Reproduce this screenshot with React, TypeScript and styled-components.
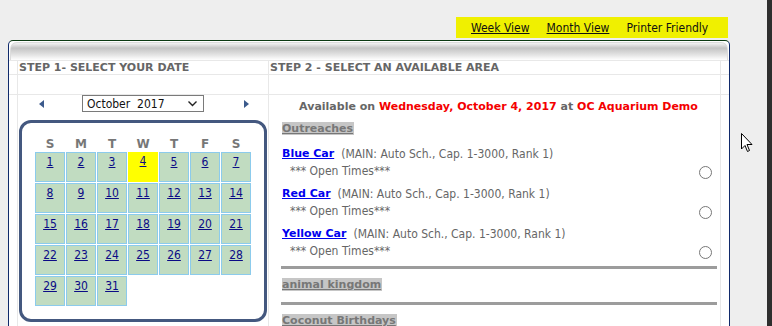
import React from 'react';
import styled, { createGlobalStyle } from 'styled-components';

const GlobalStyle = createGlobalStyle`
  html, body {
    margin: 0;
    padding: 0;
    background: #eeeeee;
    font-family: "DejaVu Sans Condensed", "DejaVu Sans", Tahoma, sans-serif;
    font-size: 12px;
    overflow: hidden;
  }
`;

const boldFont = `
  font-family: "DejaVu Sans", Verdana, sans-serif;
  font-weight: bold;
  font-size: 11px;
`;

const Page = styled.div`
  display: flex;
  height: 326px;
  position: relative;
`;

const Main = styled.div`
  flex: 1;
  padding: 17px 0 0 8px;
`;

const EdgeStrip = styled.div`
  width: 5px;
  background: #2e2e2e;
`;

const Frame = styled.div`
  width: 722px;
  display: flex;
  flex-direction: column;
`;

const Toolbar = styled.div`
  align-self: flex-end;
  margin-right: 2px;
  height: 21px;
  width: 272px;
  box-sizing: border-box;
  background: #f0f000;
  display: flex;
  align-items: flex-end;
  gap: 17px;
  padding: 0 0 3px 15px;
`;

const ToolLink = styled.a<{ $plain?: boolean }>`
  color: #111;
  line-height: 14px;
  text-decoration: ${(p) => (p.$plain ? 'none' : 'underline')};
  cursor: pointer;
`;

const Panel = styled.div`
  margin-top: 2px;
  border: 1px solid #102a6b;
  border-top-color: #0c3a12;
  border-bottom: none;
  border-radius: 5px 5px 0 0;
  background: #fff;
  height: 300px;
  overflow: hidden;
`;

const GradientBar = styled.div`
  margin: 1px 1px 0;
  height: 17px;
  border: 1px solid #dcdcdc;
  border-bottom: none;
  border-radius: 7px 7px 0 0;
  background: linear-gradient(to bottom, #f4f4f4 0%, #c4c4c4 30%, #e4e4e4 70%, #ffffff 100%);
`;

const Grid = styled.div`
  display: grid;
  grid-template-columns: 8px 250px 451px 8px;
  grid-template-rows: 13px 19px 240px;
  gap: 1px;
  padding-top: 1px;
  background: #e8e8e8;
`;

const Cell = styled.div`
  background: #fff;
  overflow: hidden;
`;

const StepTitle = styled.div`
  ${boldFont}
  color: #666;
  line-height: 13px;
  padding-left: 1px;
  white-space: nowrap;
`;

const LeftCol = styled.div`
  display: flex;
  flex-direction: column;
`;

const MonthNav = styled.div`
  display: flex;
  align-items: center;
  height: 17px;
  padding-left: 21px;
`;

const Arrow = styled.span<{ $right?: boolean }>`
  width: 0;
  height: 0;
  border-top: 4px solid transparent;
  border-bottom: 4px solid transparent;
  ${(p) => (p.$right ? 'border-left: 5px solid #3b5a8c;' : 'border-right: 5px solid #3b5a8c;')}
`;

const MonthSelect = styled.div`
  margin: 0 40px 0 38px;
  width: 122px;
  height: 17px;
  box-sizing: border-box;
  border: 1px solid #7a7a7a;
  display: flex;
  align-items: center;
  justify-content: space-between;
  padding: 0 6px 0 4px;
  color: #111;
  white-space: pre;
`;

const CalendarBox = styled.div`
  margin: 8px 0 0 1px;
  width: 248px;
  height: 202px;
  box-sizing: border-box;
  border: 3px solid #44587f;
  border-radius: 12px;
  padding: 15px 0 0 13px;
`;

const CalTable = styled.table`
  border-collapse: separate;
  border-spacing: 1px;
  margin: -1px;
`;

const DayHead = styled.th`
  ${boldFont}
  font-size: 12px;
  color: #777;
  height: 13px;
  line-height: 12px;
  padding: 0;
  vertical-align: top;
`;

const DayCell = styled.td<{ $today?: boolean; $empty?: boolean }>`
  width: 28px;
  height: 28px;
  padding: 0;
  text-align: center;
  vertical-align: top;
  background: ${(p) => (p.$empty ? 'transparent' : p.$today ? '#ffff00' : '#c1dcc1')};
  border: 1px solid ${(p) => (p.$empty ? 'transparent' : p.$today ? '#ffff00' : '#8ccbec')};
`;

const DayLink = styled.a<{ $today?: boolean }>`
  display: block;
  margin-top: ${(p) => (p.$today ? '1px' : '2px')};
  color: #0b0b86;
  text-decoration: underline;
  line-height: 14px;
  font-size: 12px;
`;

const RightCol = styled.div`
  padding: 4px 8px 0 13px;
`;

const Available = styled.div`
  ${boldFont}
  text-align: center;
  color: #666;
  line-height: 16px;
  padding-left: 3px;
  white-space: nowrap;
`;

const Red = styled.span`
  color: #f40000;
`;

const GroupName = styled.div`
  ${boldFont}
  display: inline-block;
  background: #c6c6c6;
  color: #777;
  text-decoration: underline;
  line-height: 13px;
  padding-right: 1px;
`;

const GroupHead = styled.div<{ $top: number }>`
  margin-top: ${(p) => p.$top}px;
  height: 13px;
`;

const Items = styled.div`
  margin-top: 10px;
`;

const Item = styled.div`
  height: 40px;
`;

const ItemLine = styled.div`
  line-height: 20px;
  height: 20px;
  color: #666;
  display: flex;
  align-items: center;
  white-space: nowrap;
`;

const ItemName = styled.a`
  ${boldFont}
  color: #0000ee;
  text-decoration: underline;
  margin-right: 7px;
`;

const OpenTimes = styled.div`
  color: #666;
  padding-left: 8px;
  display: flex;
  justify-content: space-between;
  align-items: flex-start;
  line-height: 14px;
  height: 14px;
`;

const Radio = styled.span`
  width: 11px;
  height: 11px;
  border: 1px solid #777;
  border-radius: 50%;
  margin-top: 2px;
  background: #fff;
`;

const Rule = styled.div<{ $top: number }>`
  height: 3px;
  background: #9c9c9c;
  margin: ${(p) => p.$top}px -5px 0 -1px;
`;

const Cursor = styled.svg`
  position: absolute;
  left: 741px;
  top: 133px;
`;

const weeks: (number | null)[][] = [
  [1, 2, 3, 4, 5, 6, 7],
  [8, 9, 10, 11, 12, 13, 14],
  [15, 16, 17, 18, 19, 20, 21],
  [22, 23, 24, 25, 26, 27, 28],
  [29, 30, 31, null, null, null, null],
];

const cars = ['Blue Car', 'Red Car', 'Yellow Car'];

const App: React.FC = () => {
  return (
    <Page>
      <GlobalStyle />
      <Main>
        <Frame>
          <Toolbar>
            <ToolLink>Week View</ToolLink>
            <ToolLink>Month View</ToolLink>
            <ToolLink $plain>Printer Friendly</ToolLink>
          </Toolbar>
          <Panel>
            <GradientBar />
            <Grid>
              <Cell />
              <Cell>
                <StepTitle>STEP 1- SELECT YOUR DATE</StepTitle>
              </Cell>
              <Cell>
                <StepTitle>STEP 2 - SELECT AN AVAILABLE AREA</StepTitle>
              </Cell>
              <Cell />

              <Cell />
              <Cell />
              <Cell />
              <Cell />

              <Cell />
              <Cell>
                <LeftCol>
                  <MonthNav>
                    <Arrow />
                    <MonthSelect>
                      {'October  2017'}
                      <svg width="9" height="6" viewBox="0 0 9 6">
                        <path d="M0.5 0.5 L4.5 4.5 L8.5 0.5" fill="none" stroke="#222" strokeWidth="1.4" />
                      </svg>
                    </MonthSelect>
                    <Arrow $right />
                  </MonthNav>
                  <CalendarBox>
                    <CalTable>
                      <thead>
                        <tr>
                          {['S', 'M', 'T', 'W', 'T', 'F', 'S'].map((d, i) => (
                            <DayHead key={i}>{d}</DayHead>
                          ))}
                        </tr>
                      </thead>
                      <tbody>
                        {weeks.map((w, wi) => (
                          <tr key={wi}>
                            {w.map((d, di) =>
                              d ? (
                                <DayCell key={di} $today={d === 4}>
                                  <DayLink $today={d === 4}>{d}</DayLink>
                                </DayCell>
                              ) : (
                                <DayCell key={di} $empty />
                              )
                            )}
                          </tr>
                        ))}
                      </tbody>
                    </CalTable>
                  </CalendarBox>
                </LeftCol>
              </Cell>
              <Cell>
                <RightCol>
                  <Available>
                    Available on <Red>Wednesday, October 4, 2017</Red> at <Red>OC Aquarium Demo</Red>
                  </Available>
                  <GroupHead $top={6}>
                    <GroupName>Outreaches</GroupName>
                  </GroupHead>
                  <Items>
                    {cars.map((c) => (
                      <Item key={c}>
                        <ItemLine>
                          <ItemName>{c}</ItemName>
                          (MAIN: Auto Sch., Cap. 1-3000, Rank 1)
                        </ItemLine>
                        <OpenTimes>
                          <span>*** Open Times***</span>
                          <Radio />
                        </OpenTimes>
                      </Item>
                    ))}
                  </Items>
                  <Rule $top={2} />
                  <GroupHead $top={8}>
                    <GroupName>animal kingdom</GroupName>
                  </GroupHead>
                  <Rule $top={12} />
                  <GroupHead $top={8}>
                    <GroupName>Coconut Birthdays</GroupName>
                  </GroupHead>
                </RightCol>
              </Cell>
              <Cell />
            </Grid>
          </Panel>
        </Frame>
      </Main>
      <EdgeStrip />
      <Cursor width="12" height="20" viewBox="0 0 12 20">
        <path d="M0.5 0.5 L0.5 16 L4 12.5 L6.5 18.5 L8.5 17.5 L6 11.5 L11 11.5 Z" fill="#fff" stroke="#000" strokeWidth="1" />
      </Cursor>
    </Page>
  );
};

export default App;
